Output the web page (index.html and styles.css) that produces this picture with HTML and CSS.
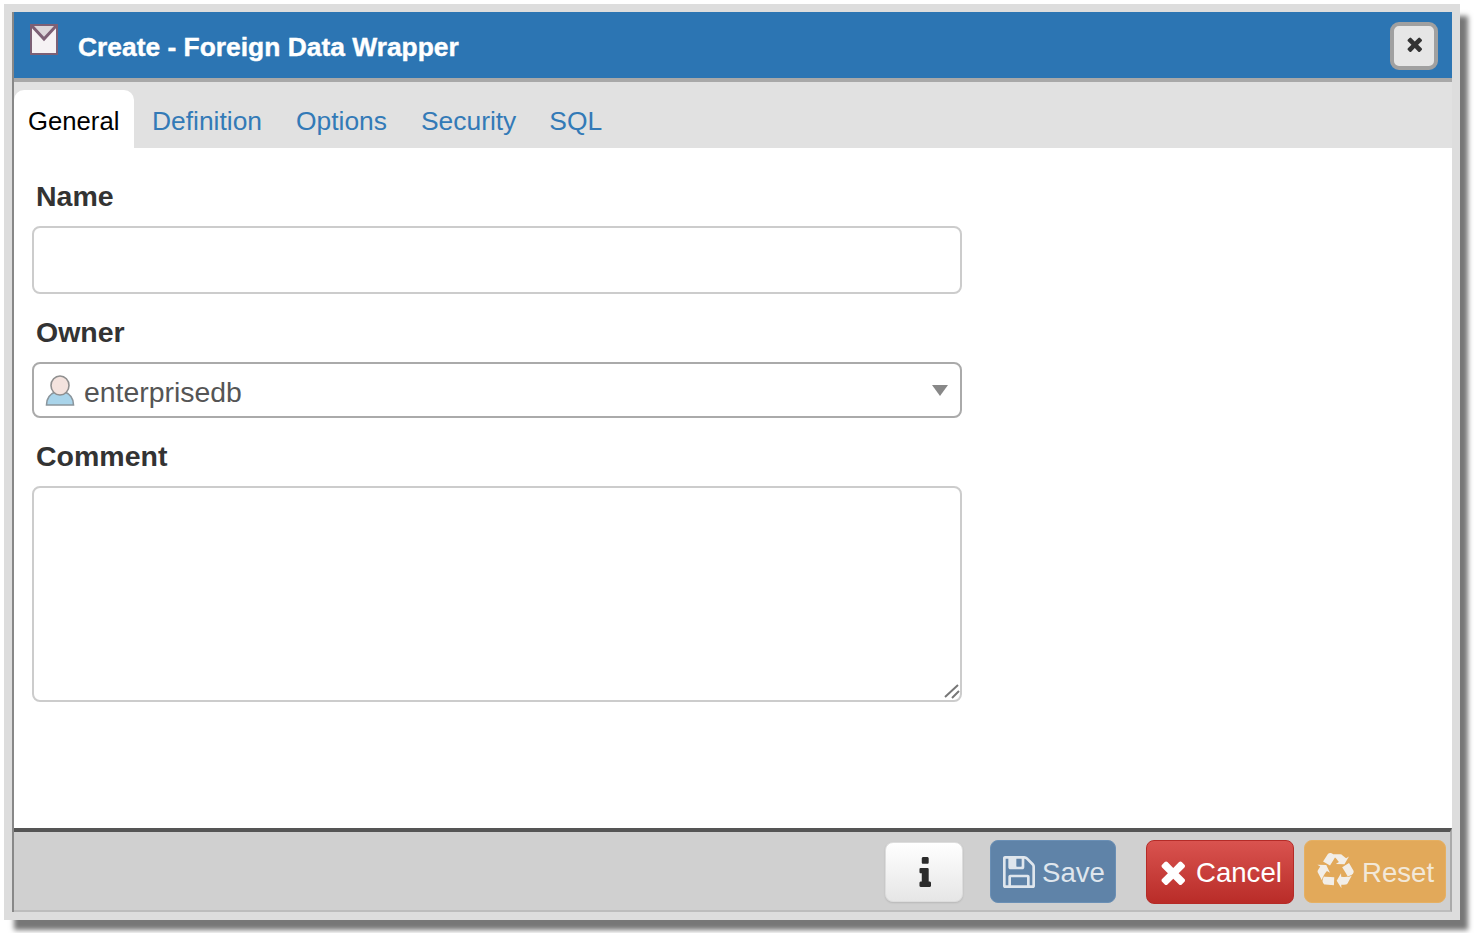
FILE: index.html
```html
<!DOCTYPE html>
<html>
  <head>
    <meta charset="utf-8">
    <title>Create - Foreign Data Wrapper</title>
    <link rel="stylesheet" href="styles.css">
  </head>
  <body>
    <div class="frame">
      <div class="dialog">
        <div class="header">
          <svg class="header-icon" width="28" height="32" viewBox="0 0 28 32">
            <rect x="1" y="1" width="26" height="29" fill="#f6f2f4" stroke="#7d6075" stroke-width="2"/>
            <path d="M3 2 L14 14 L25 2 Z" fill="#dcd6da"/>
            <path d="M2 2 L14 15 L26 2" fill="none" stroke="#7d6075" stroke-width="3"/>
          </svg>
          <span class="title">Create - Foreign Data Wrapper</span>
          <button class="close" type="button">
            <svg width="16" height="16" viewBox="174 238 1316 1316"><path fill="#333" d="M1490 1322q0 40-28 68l-136 136q-28 28-68 28t-68-28l-294-294-294 294q-28 28-68 28t-68-28l-136-136q-28-28-28-68t28-68l294-294-294-294q-28-28-28-68t28-68l136-136q28-28 68-28t68 28l294 294 294-294q28-28 68-28t68 28l136 136q28 28 28 68t-28 68l-294 294 294 294q28 28 28 68z"/></svg>
          </button>
        </div>

        <div class="tabs">
          <a class="tab active">General</a>
          <a class="tab">Definition</a>
          <a class="tab">Options</a>
          <a class="tab">Security</a>
          <a class="tab">SQL</a>
        </div>

        <div class="content">
          <label class="field-label">Name</label>
          <input class="text-input" type="text">

          <label class="field-label">Owner</label>
          <div class="select-box">
            <svg class="user-icon" width="30" height="32" viewBox="0 0 30 32">
              <path d="M1.5 30 C1.5 23 5 19 10 17 L20 17 C25 19 28.5 23 28.5 30 Z" fill="#a9d4ea" stroke="#8a959c" stroke-width="1.6"/>
              <ellipse cx="15" cy="10.5" rx="9" ry="9.5" fill="#f4e3de" stroke="#8f8f8f" stroke-width="1.6"/>
            </svg>
            <span class="select-value">enterprisedb</span>
            <span class="select-arrow"></span>
          </div>

          <label class="field-label">Comment</label>
          <div class="comment-wrap">
            <textarea class="comment"></textarea>
            <svg class="grip" width="16" height="16" viewBox="0 0 16 16">
              <path d="M1 14 L14 2 M8 15 L15 8" stroke="#777" stroke-width="2" fill="none"/>
            </svg>
          </div>
        </div>

        <div class="footer">
          <button class="btn btn-info" type="button">
            <svg width="15" height="30" viewBox="384 128 832 1408" preserveAspectRatio="none"><path fill="#2b2b2b" d="M1216 1344v128q0 26-19 45t-45 19h-512q-26 0-45-19t-19-45v-128q0-26 19-45t45-19h64v-384h-64q-26 0-45-19t-19-45v-128q0-26 19-45t45-19h384q26 0 45 19t19 45v576h64q26 0 45 19t19 45zm-128-1152v192q0 26-19 45t-45 19h-256q-26 0-45-19t-19-45v-192q0-26 19-45t45-19h256q26 0 45 19t19 45z"/></svg>
          </button>
          <button class="btn btn-save" type="button">
            <svg width="32" height="32" viewBox="128 128 1536 1536"><path fill="#dfe6ed" d="M512 1536h768v-384h-768v384zm896 0h128v-896q0-14-10-38.5t-20-34.5l-281-281q-10-10-34-20t-39-10v416q0 40-28 68t-68 28h-576q-40 0-68-28t-28-68v-416h-128v1280h128v-416q0-40 28-68t68-28h832q40 0 68 28t28 68v416zm-384-928v-320q0-13-9.5-22.5t-22.5-9.5h-192q-13 0-22.5 9.5t-9.5 22.5v320q0 13 9.5 22.5t22.5 9.5h192q13 0 22.5-9.5t9.5-22.5zm640 32v928q0 40-28 68t-68 28h-1344q-40 0-68-28t-28-68v-1344q0-40 28-68t68-28h928q40 0 88 20t76 48l280 280q28 28 48 76t20 88z"/></svg>
            <span class="btn-text">Save</span>
          </button>
          <button class="btn btn-cancel" type="button">
            <svg width="26" height="26" viewBox="174 238 1316 1316"><path fill="#fff" d="M1490 1322q0 40-28 68l-136 136q-28 28-68 28t-68-28l-294-294-294 294q-28 28-68 28t-68-28l-136-136q-28-28-28-68t28-68l294-294-294-294q-28-28-28-68t28-68l136-136q28-28 68-28t68 28l294 294 294-294q28-28 68-28t68 28l136 136q28 28 28 68t-28 68l-294 294 294 294q28 28 28 68z"/></svg>
            <span class="btn-text">Cancel</span>
          </button>
          <button class="btn btn-reset" type="button">
            <svg width="37" height="37" viewBox="0 0 1792 1792"><path fill="#f2eee8" d="M836 1169l-15 368-2 22-420-29q-36-3-67-31.5t-47-65.5q-11-27-14.5-55t4-65 12-55 21.5-64 19-53q78 12 509 28zm-387-586l180 379-147-92q-63 72-111.5 144.5t-72.5 125-39.5 94.5-18.5 63l-4 21-190-357q-17-26-18-56t6-47l8-18q35-63 114-188l-140-86zm1231 517l-188 359q-12 29-36.5 46.5t-43.5 20.5l-18 4q-71 7-219 12l8 164-230-367 211-362 7 173q170 16 283 5t170-33zm-785-924q-47 63-265 435l-317-187-19-12 225-356q20-31 60-45t80-10q24 2 48.5 12t42 21 41.5 33 36 34.5 36 39.5 32 35zm655 307l212 363q18 37 12.5 76t-27.5 74q-13 20-33 37t-38 28-48.5 22-47 16-51.5 14-46 12q-34-72-265-436l313-195zm-143-226l142-83-220 373-419-20 151-86q-50-70-104-138t-101-118-82-76-49-35l-15-10 409-5q31-3 62 13t45 38z"/></svg>
            <span class="btn-text">Reset</span>
          </button>
        </div>
      </div>
    </div>
  </body>
</html>
```

FILE: styles.css
```css
html, body {
  margin: 0;
  padding: 0;
  background-color: #fff;
}
body {
  box-sizing: border-box;
  height: 933px;
  font-family: "Liberation Sans", Arial, sans-serif;
  padding: 4px;
  overflow: hidden;
}
.frame {
  box-sizing: border-box;
  width: 1456px;
  height: 916px;
  padding: 8px;
  background-color: #ddd;
  box-shadow: 9px 11px 5px -1px #777;
}
.dialog {
  box-sizing: border-box;
  height: 900px;
  display: flex;
  flex-direction: column;
  border-left: 2px solid #888;
  background-color: #fff;
}

/* title bar */
.header {
  box-sizing: border-box;
  height: 70px;
  display: flex;
  align-items: center;
  padding: 0 14px 0 16px;
  background-color: #2c75b3;
  border-bottom: 4px solid #a8a8a8;
}
.header-icon {
  align-self: flex-start;
  margin-top: 12px;
  margin-right: 20px;
}
.title {
  font-size: 26.4px;
  font-weight: bold;
  color: #fff;
  margin-top: 5px;
  -webkit-text-stroke: 0.4px #fff;
}
.close {
  box-sizing: border-box;
  width: 48px;
  height: 48px;
  margin-left: auto;
  margin-top: 2px;
  padding: 0 0 4px;
  display: flex;
  align-items: center;
  justify-content: center;
  background-color: #e6e6e6;
  border: 4px solid #a0a0a0;
  border-radius: 9px;
}

/* tabs */
.tabs {
  box-sizing: border-box;
  height: 66px;
  padding-top: 8px;
  display: flex;
  background-color: #e1e1e1;
}
.tab {
  padding: 0 17px;
  font-size: 26.4px;
  line-height: 62px;
  color: #337ab7;
}
.tab.active {
  box-sizing: border-box;
  width: 120px;
  padding: 0 0 0 14px;
  font-size: 25.7px;
  color: #000;
  background-color: #fff;
  border-radius: 10px 10px 0 0;
}
.tab:nth-child(2) {
  padding-left: 18px;
}
.tab:last-child {
  padding-left: 16px;
}

/* form */
.content {
  flex: 1;
  padding: 0 0 0 18px;
}
.field-label {
  display: block;
  height: 32px;
  margin: 22px 0 14px 4px;
  font-size: 28.5px;
  font-weight: bold;
  line-height: 33px;
  color: #333;
}
.field-label:first-child {
  margin-top: 32px;
}
.text-input,
.comment {
  display: block;
  box-sizing: border-box;
  width: 930px;
  margin: 0;
  background-color: #fff;
  border: 2px solid #ccc;
  border-radius: 8px;
  outline: none;
}
.text-input {
  height: 68px;
}
.select-box {
  box-sizing: border-box;
  width: 930px;
  height: 56px;
  display: flex;
  align-items: center;
  padding: 0 12px 0 11px;
  border: 2px solid #aaa;
  border-radius: 8px;
}
.user-icon {
  margin-top: 2px;
  margin-right: 9px;
}
.select-value {
  font-size: 28.4px;
  color: #555;
  margin-top: 5px;
}
.select-arrow {
  width: 0;
  height: 0;
  margin-left: auto;
  border-left: 8px solid transparent;
  border-right: 8px solid transparent;
  border-top: 11px solid #888;
}
.comment-wrap {
  position: relative;
  width: 930px;
}
.comment {
  height: 216px;
  resize: none;
}
.grip {
  position: absolute;
  right: 2px;
  bottom: 3px;
}

/* button row */
.footer {
  box-sizing: border-box;
  height: 84px;
  display: flex;
  align-items: flex-start;
  padding: 8px 4px 0 0;
  justify-content: flex-end;
  background-color: #d0d0d0;
  border-top: 4px solid #555;
  border-bottom: 2px solid #bdbdbd;
  border-right: 2px solid #aaa;
}
.btn {
  box-sizing: border-box;
  height: 63px;
  display: flex;
  align-items: center;
  padding: 0;
  font-family: inherit;
  font-size: 27.6px;
  border: 1px solid transparent;
  border-radius: 8px;
}
.btn-text {
  margin-top: 2px;
}
.btn-info {
  width: 78px;
  height: 60px;
  margin-top: 2px;
  margin-right: 27px;
  padding-left: 30px;
  background: linear-gradient(#fff, #e6e6e6);
  border-color: #ddd;
  box-shadow: 0 1px 2px rgba(0, 0, 0, 0.12);
}
.btn-save {
  width: 126px;
  gap: 7px;
  padding-left: 12px;
  margin-right: 30px;
  color: #dfe6ed;
  background-color: #5f83a8;
  border-color: #6a8fb5;
}
.btn-cancel {
  width: 148px;
  height: 64px;
  gap: 9px;
  padding-left: 12px;
  margin-right: 10px;
  color: #fff;
  background: linear-gradient(#d9534f, #b92c28);
  border-color: #b52b27;
}
.btn-cancel .btn-text {
  margin-left: 2px;
}
.btn-reset {
  width: 142px;
  gap: 8px;
  padding-left: 12px;
  color: #f2e8d8;
  background-color: #e2a95a;
  border-color: #e6b062;
}
```
